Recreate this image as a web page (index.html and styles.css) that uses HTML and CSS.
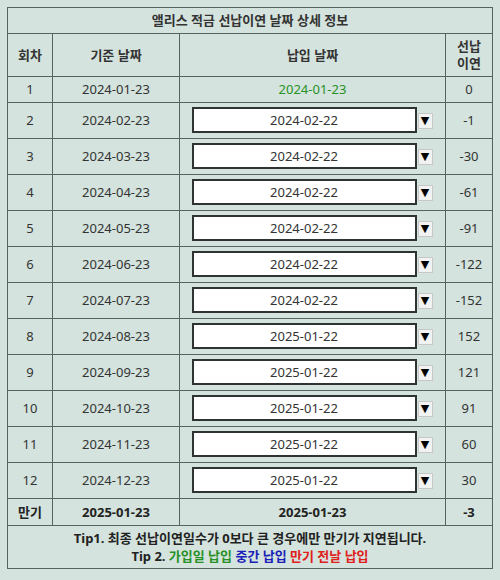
FILE: index.html
```html
<!DOCTYPE html>
<html lang="ko">
<head>
<meta charset="utf-8">
<link rel="stylesheet" href="styles.css">
</head>
<body>
<table class="info">
  <colgroup>
    <col class="c1"><col class="c2"><col class="c3"><col class="c4">
  </colgroup>
  <tr class="title"><th colspan="4">앨리스 적금 선납이연 날짜 상세 정보</th></tr>
  <tr class="head"><th>회차</th><th>기준 날짜</th><th>납입 날짜</th><th>선납<br>이연</th></tr>
  <tr class="plain"><td>1</td><td>2024-01-23</td><td class="green">2024-01-23</td><td>0</td></tr>
  <tr class="sel"><td>2</td><td>2024-02-23</td><td><div class="pick"><span class="box">2024-02-22</span><span class="arrow">▼</span></div></td><td>-1</td></tr>
  <tr class="sel"><td>3</td><td>2024-03-23</td><td><div class="pick"><span class="box">2024-02-22</span><span class="arrow">▼</span></div></td><td>-30</td></tr>
  <tr class="sel"><td>4</td><td>2024-04-23</td><td><div class="pick"><span class="box">2024-02-22</span><span class="arrow">▼</span></div></td><td>-61</td></tr>
  <tr class="sel"><td>5</td><td>2024-05-23</td><td><div class="pick"><span class="box">2024-02-22</span><span class="arrow">▼</span></div></td><td>-91</td></tr>
  <tr class="sel"><td>6</td><td>2024-06-23</td><td><div class="pick"><span class="box">2024-02-22</span><span class="arrow">▼</span></div></td><td>-122</td></tr>
  <tr class="sel"><td>7</td><td>2024-07-23</td><td><div class="pick"><span class="box">2024-02-22</span><span class="arrow">▼</span></div></td><td>-152</td></tr>
  <tr class="sel"><td>8</td><td>2024-08-23</td><td><div class="pick"><span class="box">2025-01-22</span><span class="arrow">▼</span></div></td><td>152</td></tr>
  <tr class="sel"><td>9</td><td>2024-09-23</td><td><div class="pick"><span class="box">2025-01-22</span><span class="arrow">▼</span></div></td><td>121</td></tr>
  <tr class="sel"><td>10</td><td>2024-10-23</td><td><div class="pick"><span class="box">2025-01-22</span><span class="arrow">▼</span></div></td><td>91</td></tr>
  <tr class="sel"><td>11</td><td>2024-11-23</td><td><div class="pick"><span class="box">2025-01-22</span><span class="arrow">▼</span></div></td><td>60</td></tr>
  <tr class="sel"><td>12</td><td>2024-12-23</td><td><div class="pick"><span class="box">2025-01-22</span><span class="arrow">▼</span></div></td><td>30</td></tr>
  <tr class="total"><td>만기</td><td>2025-01-23</td><td>2025-01-23</td><td>-3</td></tr>
  <tr class="tips"><td colspan="4">
    <div>Tip1. 최종 선납이연일수가 0보다 큰 경우에만 만기가 지연됩니다.</div>
    <div>Tip 2. <span class="green">가입일 납입</span> <span class="blue">중간 납입</span> <span class="red">만기 전날 납입</span></div>
  </td></tr>
</table>
</body>
</html>
```
FILE: styles.css
```css
html, body {
  margin: 0;
  background: #d4e3dd;
}
body {
  padding: 7px 0 0 7px;
  font-family: "Noto Sans", "Noto Sans CJK KR", sans-serif;
  font-size: 13px;
  color: #333;
}
.info {
  border-collapse: collapse;
  table-layout: fixed;
  width: 485px;
}
.c1 { width: 45px; }
.c2 { width: 127px; }
.c3 { width: 266px; }
.c4 { width: 47px; }
.info th, .info td {
  border: 1px solid #56635f;
  text-align: center;
  vertical-align: middle;
  padding: 0 2px;
  line-height: 17px;
}
.info th {
  font-weight: bold;
}
.title th { height: 25px; padding: 0; }
.head th { height: 42px; padding: 0; }
.plain td { height: 25px; padding: 0; }
.sel td { height: 35px; padding: 0; }
.total td { height: 26px; padding: 0; font-weight: bold; color: #222; }
.tips td { height: 42px; padding: 0; font-weight: bold; color: #222; line-height: 18px; }
.green { color: #279127; }
.blue { color: #1a1fb8; }
.red { color: #e0201c; }
.pick {
  display: flex;
  align-items: center;
  justify-content: center;
  gap: 1px;
  padding-right: 1px;
}
.box {
  box-sizing: border-box;
  width: 225px;
  height: 26px;
  border: 2px solid #2e3432;
  background: #fff;
  line-height: 22px;
  color: #333;
  margin-top: -1px;
}
.arrow {
  box-sizing: border-box;
  width: 15px;
  height: 16px;
  background: #f2f2f2;
  border: 1px solid #c8c8c8;
  color: #000;
  font-size: 11px;
  line-height: 14px;
  font-family: "DejaVu Sans", sans-serif;
}
```
